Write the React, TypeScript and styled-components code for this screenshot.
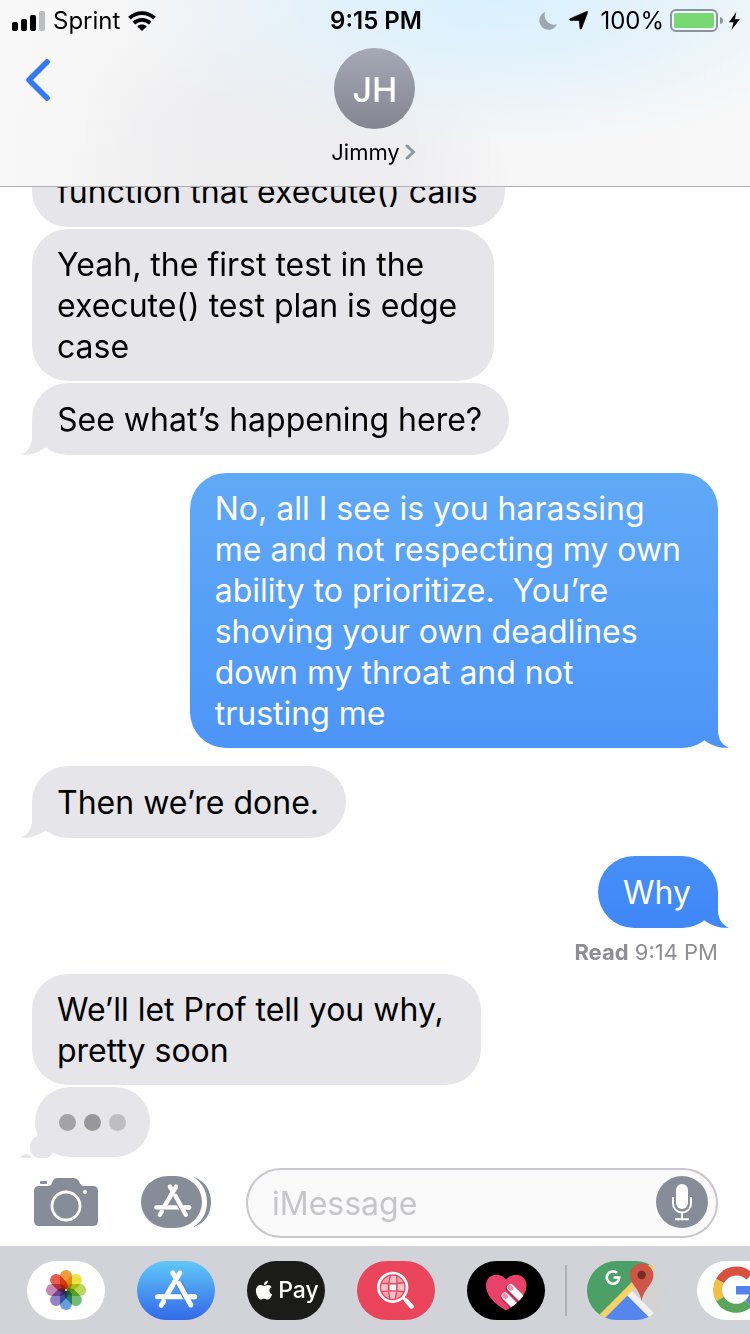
import React from "react";
import styled, { createGlobalStyle, css } from "styled-components";
import { FaApple } from "react-icons/fa";

const SLATE = "#868d99";
const BUBBLE_GRAY = "#e5e5ea";
const BUBBLE_BLUE =
  "linear-gradient(180deg, #61aaf7 35%, #4c95f7 56%, #468ff7 64%, #3f86f7 70%) fixed";

const GlobalStyle = createGlobalStyle`
  *, *::before, *::after { box-sizing: border-box; }
  body {
    margin: 0;
    background: #fff;
    color: #000;
    font-family: Inter, "Liberation Sans", sans-serif;
  }
  button, input { font: inherit; color: inherit; }
`;

const Screen = styled.div`
  display: flex;
  flex-direction: column;
  height: 100vh;
  overflow: hidden;
`;

/* ---------- Header ---------- */

const Header = styled.header`
  flex: none;
  border-bottom: 1px solid #b0b1b4;
  background:
    linear-gradient(90deg, #f8f8f8 0%, rgba(248, 248, 248, 0.8) 8%, rgba(248, 248, 248, 0.3) 18%, rgba(248, 248, 248, 0) 30%),
    radial-gradient(50% 80% at 66% 0%, #d9f1ff 0%, rgba(222, 241, 252, 0.8) 40%, rgba(240, 244, 248, 0) 100%),
    radial-gradient(36% 90% at 32% 100%, #ededee 0%, #ededef 50%, rgba(240, 240, 241, 0) 100%),
    linear-gradient(90deg, #f5f5f6 0%, #f2f2f4 50%, #f7f7f8 70%, #f8f8f8 100%);
`;

const StatusBar = styled.div`
  display: grid;
  grid-template-columns: 1fr auto 1fr;
  align-items: center;
  height: 41px;
  padding: 0 10px 0 12px;
  font-size: 24px;
  line-height: 41px;
`;

const StatusGroup = styled.div<{ $end?: boolean }>`
  display: flex;
  align-items: center;
  justify-content: ${(p) => (p.$end ? "flex-end" : "flex-start")};
  gap: ${(p) => (p.$end ? 6 : 8)}px;
  svg { display: block; flex: none; }
`;

const Indicators = styled.div`
  display: flex;
  align-items: center;
  gap: 12px;
`;

const Time = styled.time`
  font-weight: 600;
`;

const Nav = styled.nav`
  display: grid;
  grid-template-columns: 1fr auto 1fr;
  align-items: start;
  padding: 7px 25px 19px;
`;

const BackButton = styled.button`
  display: block;
  justify-self: start;
  margin-top: 10px;
  padding: 0;
  border: 0;
  background: none;
  svg { display: block; }
`;

const Contact = styled.button`
  display: flex;
  flex-direction: column;
  align-items: center;
  gap: 8px;
  padding: 0;
  border: 0;
  background: none;
`;

const Avatar = styled.span`
  width: 81px;
  height: 81px;
  border-radius: 50%;
  background: linear-gradient(180deg, #a5a9b6, #838690);
  color: #fff;
  font-size: 34px;
  font-weight: 500;
  line-height: 84px;
  text-align: center;
`;

const ContactName = styled.span`
  display: flex;
  align-items: center;
  gap: 5px;
  padding-right: 3px;
  font-size: 22px;
  line-height: 30px;
`;

/* ---------- Conversation ---------- */

const Thread = styled.main`
  display: flex;
  flex: 1;
  flex-direction: column;
  justify-content: flex-end;
  min-height: 0;
  padding: 0 32px 1px;
  overflow: hidden;
`;

const Group = styled.section<{ $mine?: boolean }>`
  display: flex;
  flex: none;
  flex-direction: column;
  align-items: ${(p) => (p.$mine ? "flex-end" : "flex-start")};
  gap: 2px;
  margin-top: 18px;
`;

const leftTail = "M11 0V18C11 27 7 33 0 35.5C9 37 18 33 24.5 28.5L40 20V0Z";
const rightTail = "M29 0V18C29 27 33 33 40 35.5C31 37 22 33 15.5 28.5L0 20V0Z";

const Bubble = styled.p<{ $mine?: boolean; $tail?: boolean; $wrapped?: boolean }>`
  position: relative;
  display: flex;
  align-items: center;
  min-height: 72px;
  margin: 0;
  padding: 15px ${(p) => (p.$wrapped ? 37 : 27)}px 14px 25px;
  border-radius: 36px;
  background: ${(p) => (p.$mine ? BUBBLE_BLUE : BUBBLE_GRAY)};
  color: ${(p) => (p.$mine ? "#fff" : "#000")};
  font-size: 32px;
  line-height: 41px;
  white-space: pre-wrap;
  ${(p) =>
    p.$tail &&
    css`
      &::after {
        content: "";
        position: absolute;
        bottom: 0;
        ${p.$mine ? "right: -11px;" : "left: -11px;"}
        width: 40px;
        height: 36px;
        background: ${p.$mine ? BUBBLE_BLUE : BUBBLE_GRAY};
        clip-path: path("${p.$mine ? rightTail : leftTail}");
      }
    `}
`;

const Receipt = styled.p`
  margin: 8px 0 -10px;
  color: #8e8e93;
  font-size: 22px;
  line-height: 28px;
`;

const Typing = styled.div`
  position: relative;
  display: flex;
  align-items: center;
  justify-content: center;
  gap: 8px;
  width: 115px;
  height: 70px;
  margin-left: 3px;
  border-radius: 35px;
  background: ${BUBBLE_GRAY};
  &::before, &::after {
    content: "";
    position: absolute;
    border-radius: 50%;
    background: ${BUBBLE_GRAY};
  }
  &::before { left: -5px; bottom: -2px; width: 24px; height: 24px; }
  &::after { left: -15px; bottom: -9px; width: 12px; height: 12px; }
`;

const Dot = styled.span<{ $shade: string }>`
  width: 17px;
  height: 17px;
  border-radius: 50%;
  background: ${(p) => p.$shade};
`;

/* ---------- Composer ---------- */

const Composer = styled.form`
  display: flex;
  flex: none;
  align-items: center;
  padding: 10px 32px 8px 34px;
  background: #fff;
`;

const ToolButton = styled.button<{ $gap: number }>`
  display: block;
  flex: none;
  margin: 0 ${(p) => p.$gap}px 2px 0;
  padding: 0;
  border: 0;
  background: none;
  svg { display: block; }
`;

const Field = styled.div`
  display: flex;
  flex: 1;
  align-items: center;
  min-width: 0;
  height: 70px;
  padding: 0 8px 2px 24px;
  border: 2px solid #c7c7cc;
  border-radius: 35px;
  background: #fafafa;
`;

const TextInput = styled.input`
  flex: 1;
  min-width: 0;
  height: 60px;
  padding: 2px 0 0;
  border: 0;
  outline: 0;
  background: none;
  font-size: 32px;
  &::placeholder { color: #c5c5ca; opacity: 1; }
`;

const MicButton = styled.button`
  display: block;
  flex: none;
  width: 52px;
  height: 52px;
  padding: 0;
  border: 0;
  border-radius: 50%;
  background: ${SLATE};
  svg { display: block; }
`;

/* ---------- App drawer ---------- */

const Drawer = styled.footer`
  display: flex;
  flex: none;
  align-items: center;
  gap: 32px;
  height: 88px;
  padding-left: 27px;
  overflow: hidden;
  background: #d1d3d8;
`;

const AppButton = styled.button<{ $bg: string }>`
  display: flex;
  flex: none;
  align-items: center;
  justify-content: center;
  gap: 3px;
  width: 78px;
  height: 59px;
  padding: 0;
  border: 0;
  border-radius: 30px;
  overflow: hidden;
  background: ${(p) => p.$bg};
  color: #fff;
  font-size: 23px;
  font-weight: 500;
  svg { display: block; flex: none; }
`;

const Divider = styled.span`
  flex: none;
  width: 2px;
  height: 51px;
  margin: 0 -12px;
  background: #b0b2b7;
`;

/* ---------- Drawings ---------- */

const Signal = () => (
  <svg width="33" height="20" viewBox="0 0 33 20" aria-hidden="true">
    <rect x="0" y="11" width="6" height="9" rx="1.8" />
    <rect x="9" y="8" width="6" height="12" rx="1.8" />
    <rect x="18" y="4" width="6" height="16" rx="1.8" />
    <rect x="27" y="0" width="6" height="20" rx="1.8" fill="#bcbdbe" />
  </svg>
);

const Wifi = () => (
  <svg width="28" height="20" viewBox="0 0 28 20" aria-hidden="true">
    <g fill="none" stroke="#000" strokeWidth="3.8">
      <path d="M1.4 7.2C8.500 .4 19.500 .4 26.600 7.200" />
      <path d="M5.800 12C10.500 7.800 17.500 7.800 22.200 12" />
    </g>
    <path d="M9.300 15.400C12 13 16 13 18.700 15.400L14 20Z" />
  </svg>
);

const Moon = () => (
  <svg width="18" height="18" viewBox="0 0 18 18" aria-hidden="true">
    <path d="M6.300 0A9.200 9.200 0 1 0 18 12.200A9.400 9.400 0 0 1 6.300 0Z" fill="#9ba8af" />
  </svg>
);

const Location = () => (
  <svg width="19" height="19" viewBox="0 0 19 19" aria-hidden="true">
    <path d="M17.600.400Q19 0 18.600 1.600L12.600 17.400Q11.700 19 11 17.400L10.200 9.400L1.400 9.400Q-.2 8.800 1 7.800Z" stroke="#000" strokeWidth=".6" />
  </svg>
);

const Battery = () => (
  <svg width="53" height="24" viewBox="0 0 53 24" aria-hidden="true">
    <rect x="1" y="1" width="46" height="21" rx="5" fill="#f1f8fc" stroke="#8a969e" strokeWidth="2" />
    <rect x="4" y="4" width="40" height="15" rx="2" fill="#78d874" />
    <path d="M50 8Q53 9 53 11.500T50 15Z" fill="#8a969e" />
  </svg>
);

const Bolt = () => (
  <svg width="11" height="18" viewBox="0 0 11 18" aria-hidden="true">
    <path d="M7.200 0L0 10.200H4.600L2.400 18L11 7.200H6Z" />
  </svg>
);

const Camera = () => (
  <svg width="64" height="48" viewBox="0 0 64 48" aria-hidden="true">
    <path
      fill={SLATE}
      d="M5 8H14Q17 8 18 5L19 2.500Q20 0 23 0H40Q43 0 44.500 2.500L46 5.500Q47 8 50 8H59Q64 8 64 13V43Q64 48 59 48H5Q0 48 0 43V13Q0 8 5 8Z"
    />
    <rect x="6" y="3" width="7" height="3" rx="1" fill={SLATE} />
    <circle cx="32" cy="28" r="14" fill="none" stroke="#fff" strokeWidth="2.8" />
    <circle cx="51" cy="14" r="2" fill="#fff" />
  </svg>
);

const CompassGlyph = ({ gap }: { gap: string }) => (
  <g fill="none" stroke="#fff" strokeWidth="5" strokeLinecap="round">
    <path d="M26.600 40.500L24.300 44.300" />
    <path d="M20.500 35.700H57.500" />
    <path d="M42.800 12L30.200 33.500" />
    <path d="M35.800 12L38.500 16.500" />
    <path d="M41.800 22L54.400 44" stroke={gap} strokeWidth="8" strokeLinecap="butt" />
    <path d="M42 22.500L53.800 44" />
    <path d="M52 35.700H57.500" />
  </g>
);

const AppsIcon = () => (
  <svg width="70" height="52" viewBox="0 0 70 52" aria-hidden="true">
    <rect width="61" height="52" rx="27" ry="26" fill={SLATE} />
    <path
      fill={SLATE}
      d="M52 1C64 4 70 15 70 26S64 48 52 51C61 46 66 37 66 26S61 6 52 1Z"
    />
    <g transform="translate(-2.6 0) scale(.88)">
      <CompassGlyph gap={SLATE} />
    </g>
  </svg>
);

const Mic = () => (
  <svg width="52" height="52" viewBox="0 0 52 52" aria-hidden="true">
    <rect x="20" y="8" width="12" height="25" rx="6" fill="#fff" />
    <path
      d="M17 21V27.500A9 9 0 0 0 35 27.500V21M26 36.500V43M19 43.300H33"
      fill="none"
      stroke="#fff"
      strokeWidth="2"
    />
  </svg>
);

const PETALS = ["#f19c3c", "#ece33c", "#b9d658", "#72bd74", "#669fdb", "#8f83c4", "#c587b5", "#e85a4c"];

const PhotosIcon = () => (
  <svg width="78" height="59" viewBox="0 0 78 59" aria-hidden="true">
    {PETALS.map((color, i) => (
      <rect
        key={color}
        x="33"
        y="9"
        width="12"
        height="20"
        rx="6"
        fill={color}
        transform={`rotate(${i * 45} 39 29)`}
        style={{ mixBlendMode: "multiply" }}
      />
    ))}
    <circle cx="39" cy="29" r="1" fill="#fff" />
  </svg>
);

const StoreIcon = () => (
  <svg width="78" height="59" viewBox="0 0 78 59" aria-hidden="true">
    <CompassGlyph gap="#4186ee" />
  </svg>
);

const SearchIcon = () => (
  <svg width="78" height="59" viewBox="0 0 78 59" aria-hidden="true">
    <circle cx="35.700" cy="26.300" r="12.500" fill="#f6a3b0" />
    <path d="M32.500 15C30 22 30 30 32.500 38H39C41 30 41 22 39 15ZM24 23Q36 21 47.500 23V29.500Q36 31.500 24 29.500Z" fill="#f9c3cb" />
    <path d="M32.800 22.500H38.800V29.800H32.800Z" fill="#fff" />
    <g fill="none" stroke="#eb455c" strokeWidth="1.400">
      <path d="M33.500 14C31 22 31 30 33 39M39.500 14C40.500 22 40.500 30 38 39M24 22.300Q36 23.500 48 21.500M24 30.500Q36 29 48 31" />
    </g>
    <circle cx="35.700" cy="26.300" r="12.300" fill="none" stroke="#eb455c" strokeWidth="1.400" />
    <circle cx="35.700" cy="26.300" r="14.300" fill="none" stroke="#fff" strokeWidth="2.700" />
    <path d="M46 36.500L49.500 40" stroke="#fff" strokeWidth="3" />
    <path d="M49.500 40L54.500 45.500" stroke="#fff" strokeWidth="4.600" strokeLinecap="round" />
  </svg>
);

const HEART = "M39 49.500C31 45 19 36 19 24.500C19 17.500 24 13.700 29.500 13.700C34 13.700 37 16 39.200 18.500C41.500 16 44.500 13.700 49 13.700C55 13.700 59.500 18 59.500 24.500C59.500 36 47 45 39 49.500Z";

const HeartIcon = () => (
  <svg width="78" height="59" viewBox="0 0 78 59" aria-hidden="true">
    <clipPath id="heart">
      <path d={HEART} />
    </clipPath>
    <path d={HEART} fill="#e8416a" />
    <g clipPath="url(#heart)" strokeLinecap="round" fill="none">
      <path d="M42.500 27.500L60 45M37.500 36L55 53.500" stroke="#b92c50" strokeWidth="8" />
      <path d="M43.500 26.500L62 45M38 35L57 54" stroke="#fff" strokeWidth="7" />
      <path d="M42.800 26.200L44 27.400M37.500 34.500L38.700 35.700" stroke="#f391ab" strokeWidth="4.600" />
    </g>
  </svg>
);

const MapsIcon = () => (
  <svg width="78" height="59" viewBox="0 0 78 59" aria-hidden="true">
    <path d="M0 0H71L12 59H0Z" fill="#4b9f67" />
    <path d="M66 0H75L16 59H7Z" fill="#f6d163" />
    <path d="M40.500 34.500L65 59H16Z" fill="#5685ec" />
    <path d="M45 30L74 59H65L40.500 34.500Z" fill="#f1f1f1" />
    <path d="M30 11.800A6.200 6.200 0 1 0 32.200 16.500H26.500" fill="none" stroke="#fff" strokeWidth="2.700" />
    <path d="M54.700 41C53.500 28 43 24 43 14.300A11.700 11.700 0 0 1 66.400 14.300C66.400 24 56 28 54.700 41Z" fill="#cf5546" />
    <circle cx="54.700" cy="14" r="4.200" fill="#732e26" />
  </svg>
);

const GoogleIcon = () => (
  <svg width="78" height="59" viewBox="0 0 78 59" aria-hidden="true">
    <g fill="none" strokeWidth="9">
      <path d="M52.500 15.500A18.500 18.500 0 0 0 23 20" stroke="#d85140" />
      <path d="M23 20A18.500 18.500 0 0 0 23 38" stroke="#f1bf42" />
      <path d="M23 38A18.500 18.500 0 0 0 51.500 42.500" stroke="#58a65c" />
      <path d="M51.500 42.500A18.500 18.500 0 0 0 57.500 29" stroke="#5383ec" />
    </g>
    <path d="M39 25H61.500V33.500H39Z" fill="#5383ec" />
  </svg>
);

/* ---------- Screen ---------- */

export default function App() {
  return (
    <Screen>
      <GlobalStyle />
      <Header>
        <StatusBar>
          <StatusGroup>
            <Signal />
            <span>Sprint</span>
            <Wifi />
          </StatusGroup>
          <Time>9:15 PM</Time>
          <StatusGroup $end>
            <Indicators>
              <Moon />
              <Location />
              <span>100%</span>
            </Indicators>
            <Battery />
            <Bolt />
          </StatusGroup>
        </StatusBar>
        <Nav>
          <BackButton type="button" aria-label="Back">
            <svg width="26" height="44" viewBox="0 0 26 44" aria-hidden="true">
              <path d="M22 4L4 22L22 40" fill="none" stroke="#3478f6" strokeWidth="5.600" strokeLinecap="round" strokeLinejoin="round" />
            </svg>
          </BackButton>
          <Contact type="button">
            <Avatar>JH</Avatar>
            <ContactName>
              Jimmy
              <svg width="11" height="16" viewBox="0 0 11 16" aria-hidden="true">
                <path d="M2 2L8.500 8L2 14" fill="none" stroke="#8e98a1" strokeWidth="3" strokeLinecap="round" />
              </svg>
            </ContactName>
          </Contact>
        </Nav>
      </Header>

      <Thread>
        <Group>
          <Bubble>function that execute() calls</Bubble>
          <Bubble $wrapped>{"Yeah, the first test in the\nexecute() test plan is edge\ncase"}</Bubble>
          <Bubble $tail>See what’s happening here?</Bubble>
        </Group>
        <Group $mine>
          <Bubble $mine $tail $wrapped>
            {"No, all I see is you harassing\nme and not respecting my own\nability to prioritize.  You’re\nshoving your own deadlines\ndown my throat and not\ntrusting me"}
          </Bubble>
        </Group>
        <Group>
          <Bubble $tail>Then we’re done.</Bubble>
        </Group>
        <Group $mine>
          <Bubble $mine $tail>Why</Bubble>
          <Receipt>
            <strong>Read</strong> 9:14 PM
          </Receipt>
        </Group>
        <Group>
          <Bubble $wrapped>{"We’ll let Prof tell you why,\npretty soon"}</Bubble>
          <Typing role="status" aria-label="Jimmy is typing">
            <Dot $shade="#a3a3a5" />
            <Dot $shade="#98989a" />
            <Dot $shade="#bebec0" />
          </Typing>
        </Group>
      </Thread>

      <Composer>
        <ToolButton type="button" aria-label="Camera" $gap={43}>
          <Camera />
        </ToolButton>
        <ToolButton type="button" aria-label="Apps" $gap={35}>
          <AppsIcon />
        </ToolButton>
        <Field>
          <TextInput type="text" aria-label="iMessage" placeholder="iMessage" />
          <MicButton type="button" aria-label="Record audio">
            <Mic />
          </MicButton>
        </Field>
      </Composer>

      <Drawer>
        <AppButton type="button" aria-label="Photos" $bg="#fff">
          <PhotosIcon />
        </AppButton>
        <AppButton type="button" aria-label="App Store" $bg="linear-gradient(180deg, #5fc8f8, #3468e8)">
          <StoreIcon />
        </AppButton>
        <AppButton type="button" $bg="#1b1b19">
          <FaApple size={22} aria-label="Apple" />
          Pay
        </AppButton>
        <AppButton type="button" aria-label="Image search" $bg="#eb455c">
          <SearchIcon />
        </AppButton>
        <AppButton type="button" aria-label="Digital Touch" $bg="#000">
          <HeartIcon />
        </AppButton>
        <Divider />
        <AppButton type="button" aria-label="Google Maps" $bg="#d2d2d2">
          <MapsIcon />
        </AppButton>
        <AppButton type="button" aria-label="Google" $bg="#fff">
          <GoogleIcon />
        </AppButton>
      </Drawer>
    </Screen>
  );
}
